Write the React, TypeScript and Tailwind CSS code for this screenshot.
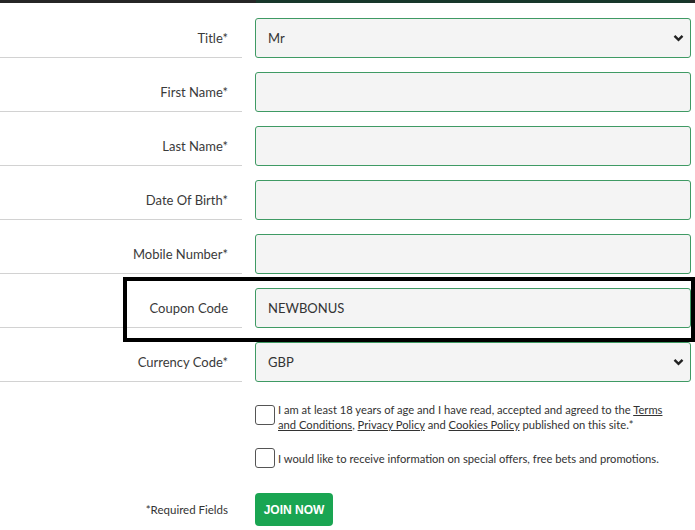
import React from "react";

const font = { fontFamily: "Lato, 'Open Sans', sans-serif" };

function Chevron() {
  return (
    <svg width="11" height="8" viewBox="0 0 11 8" className="absolute right-[6px] top-1/2 -translate-y-1/2">
      <polyline points="1.5,1.8 5.5,5.8 9.5,1.8" fill="none" stroke="#222" strokeWidth="2.4" />
    </svg>
  );
}

function Row({ label, value, select }: { label: string; value?: string; select?: boolean }) {
  return (
    <div className="flex h-[54px]">
      <div className="w-[242px] h-[54px] flex items-center justify-end pt-[16px] pr-[14px] border-b border-[#d2d2d2] text-[13px] text-[#3a3a3a]">
        {label}
      </div>
      <div className="ml-[13px] mt-[14px] w-[436px] h-[40px] relative rounded-[3px] border border-[#3f9a64] bg-[#f4f4f4] flex items-center pl-[12px] pt-[1px] text-[13px] text-[#333]">
        {value}
        {select && <Chevron />}
      </div>
    </div>
  );
}

export default function App() {
  return (
    <div className="w-[695px] h-[530px] bg-white relative overflow-hidden" style={font}>
      <div className="flex h-[3px]">
        <div className="w-[256px] bg-[#262626]" />
        <div className="w-[434px] bg-[#17372a]" />
        <div className="flex-1 bg-[#262626]" />
      </div>
      <div className="h-px" />
      <Row label="Title*" value="Mr" select />
      <Row label="First Name*" />
      <Row label="Last Name*" />
      <Row label="Date Of Birth*" />
      <Row label="Mobile Number*" />
      <Row label="Coupon Code" value="NEWBONUS" />
      <Row label="Currency Code*" value="GBP" select />

      <div className="ml-[255px] mt-[20px] flex items-start">
        <div className="w-[20px] h-[20px] mt-[3px] rounded-[3px] border border-[#555] bg-white shrink-0" />
        <div className="ml-[3px] text-[11.2px] leading-[15px] text-[#333] w-[392px]">
          I am at least 18 years of age and I have read, accepted and agreed to the{" "}
          <span className="underline">Terms and Conditions</span>, <span className="underline">Privacy Policy</span> and{" "}
          <span className="underline">Cookies Policy</span> published on this site.*
        </div>
      </div>
      <div className="ml-[255px] mt-[16px] flex items-center">
        <div className="w-[20px] h-[20px] rounded-[3px] border border-[#555] bg-white shrink-0" />
        <div className="ml-[3px] text-[11.2px] leading-[15px] text-[#333]">
          I would like to receive information on special offers, free bets and promotions.
        </div>
      </div>
      <div className="flex items-center mt-[25px]">
        <div className="w-[242px] pr-[14px] text-right text-[11.5px] text-[#333]">*Required Fields</div>
        <button
          className="ml-[13px] w-[78px] h-[33px] rounded-[4px] bg-[#1aa552] text-white text-[12px] font-bold"
          style={{ fontFamily: "'Liberation Sans', Arial, sans-serif" }}
        >
          JOIN NOW
        </button>
      </div>

      <div className="absolute left-[123px] top-[277px] w-[572px] h-[65px] border-4 border-black pointer-events-none" />
    </div>
  );
}
